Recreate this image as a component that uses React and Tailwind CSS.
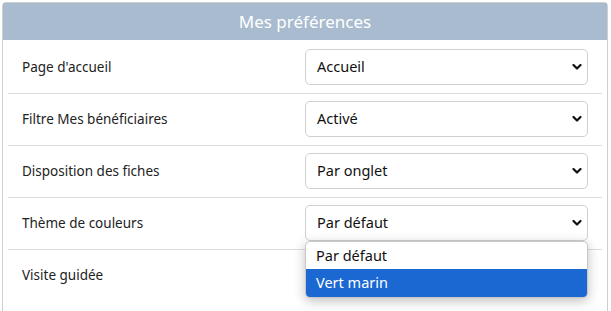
import React from 'react';

const rows = [
    { label: "Page d'accueil", value: 'Accueil' },
    { label: 'Filtre Mes bénéficiaires', value: 'Activé' },
    { label: 'Disposition des fiches', value: 'Par onglet' },
    { label: 'Thème de couleurs', value: 'Par défaut' },
    { label: 'Visite guidée', value: null },
];

const Chevron = () => (
    <svg width="10" height="7" viewBox="0 0 10 7" className="absolute right-[5px] top-1/2 -translate-y-1/2">
        <polyline points="1.5,1.5 5,5 8.5,1.5" fill="none" stroke="#111" strokeWidth="2.2" strokeLinecap="round" strokeLinejoin="round" />
    </svg>
);

const FakeSelect = ({ value }) => (
    <div className="relative w-[283px] h-[36px] border border-[#d0d0d0] rounded-[5px] bg-white flex items-center pl-[11px] text-[14.5px] text-[#111]">
        {value}
        <Chevron />
    </div>
);

const App = () => {
    return (
        <div className="w-[611px] h-[311px] bg-white pt-[2px] pl-[2px] overflow-hidden" style={{ fontFamily: '"Noto Sans", "Open Sans", sans-serif' }}>
            <div className="w-[606px] border border-[#cfcfcf] rounded-t-[4px] h-[320px]">
                <div className="h-[37px] bg-[#a8bbcf] flex items-center justify-center text-white text-[17px]">
                    Mes préférences
                </div>
                <div className="px-[5px] pt-[2px]">
                    {rows.map((row, i) => (
                        <div key={row.label} className={`relative flex items-center justify-between pl-[14px] pr-[14px] pt-[7px] pb-[8px] ${i < rows.length - 1 ? 'border-b border-[#dcdcdc]' : ''}`}>
                            <span className="text-[13.5px] text-[#222]">{row.label}</span>
                            {row.value ? <FakeSelect value={row.value} /> : <div className="h-[36px]" />}
                            {i === 3 && (
                                <div className="absolute left-[297px] top-[43px] w-[283px] bg-white border border-[#c8c8c8] rounded-[5px] shadow-[0_3px_12px_rgba(0,0,0,0.25)] overflow-hidden z-10 text-[14.5px]">
                                    <div className="h-[27px] flex items-center pl-[10px] text-[#111]">Par défaut</div>
                                    <div className="h-[28px] flex items-center pl-[10px] bg-[#1b68d3] text-white">Vert marin</div>
                                </div>
                            )}
                        </div>
                    ))}
                </div>
            </div>
        </div>
    );
};

export default App;
